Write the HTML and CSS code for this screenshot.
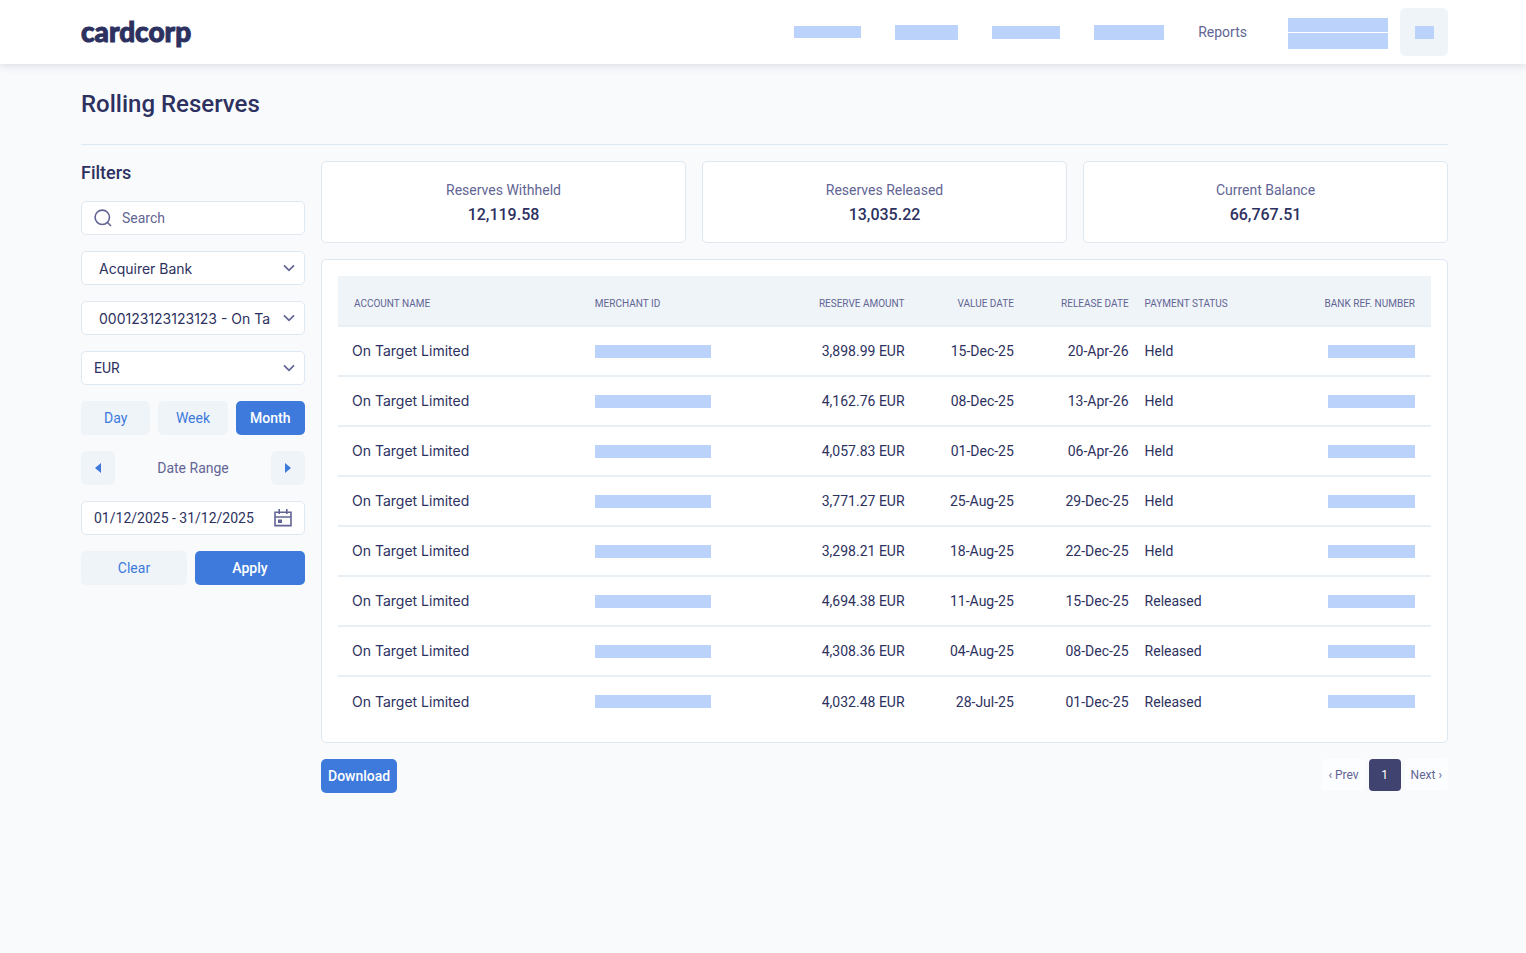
FILE: index.html
```html
<!DOCTYPE html>
<html lang="en">
<head>
<meta charset="utf-8">
<meta name="viewport" content="width=device-width, initial-scale=1">
<title>Rolling Reserves</title>
<link rel="stylesheet" href="styles.css">
</head>
<body>
<header class="topbar">
  <a class="logo" href="#">cardcorp</a>
  <nav class="nav">
    <span class="mask mask-nav-1"></span>
    <span class="mask mask-nav-2"></span>
    <span class="mask mask-nav-3"></span>
    <span class="mask mask-nav-4"></span>
    <a class="nav-link" href="#">Reports</a>
  </nav>
  <div class="user">
    <span class="mask mask-user-name"></span>
    <span class="mask mask-user-role"></span>
  </div>
  <button class="avatar" type="button" aria-label="Account"><span class="mask mask-avatar"></span></button>
</header>

<main class="page">
  <h1 class="title">Rolling Reserves</h1>
  <div class="layout">
    <form class="filters">
      <h2 class="filters-title">Filters</h2>
      <div class="field">
        <svg class="search-icon" viewBox="0 0 18 18" aria-hidden="true"><circle cx="8.3" cy="8.3" r="7.2"/><path d="M13.3 13.3 17 17"/></svg>
        <input class="control control-search" type="text" placeholder="Search" aria-label="Search">
      </div>
      <div class="field">
        <select class="control control-wide" aria-label="Acquirer bank"><option>Acquirer Bank</option></select>
        <svg class="chevron" viewBox="0 0 12 8" aria-hidden="true"><path d="M1 1.3 6 6.3 11 1.3"/></svg>
      </div>
      <div class="field">
        <select class="control control-wide" aria-label="Merchant"><option>000123123123123 - On Ta</option></select>
        <svg class="chevron" viewBox="0 0 12 8" aria-hidden="true"><path d="M1 1.3 6 6.3 11 1.3"/></svg>
      </div>
      <div class="field">
        <select class="control" aria-label="Currency"><option>EUR</option></select>
        <svg class="chevron" viewBox="0 0 12 8" aria-hidden="true"><path d="M1 1.3 6 6.3 11 1.3"/></svg>
      </div>
      <div class="periods">
        <button class="btn" type="button">Day</button>
        <button class="btn" type="button">Week</button>
        <button class="btn btn-primary" type="button">Month</button>
      </div>
      <div class="range">
        <button class="btn btn-square" type="button" aria-label="Previous range"><svg class="arrow" viewBox="0 0 6 10" aria-hidden="true"><path d="M6 0v10L0 5z"/></svg></button>
        <label for="dates">Date Range</label>
        <button class="btn btn-square" type="button" aria-label="Next range"><svg class="arrow" viewBox="0 0 6 10" aria-hidden="true"><path d="M0 0v10l6-5z"/></svg></button>
      </div>
      <div class="field">
        <input class="control control-date" id="dates" type="text" value="01/12/2025 - 31/12/2025">
        <svg class="calendar" viewBox="0 0 18 18" aria-hidden="true"><path class="calendar-line" d="M1 3.2h16v13.4H1zM1 8h16M5.2 0v5M12.8 0v5"/><path class="calendar-day" d="M4 10.5h4v3.5H4z"/></svg>
      </div>
      <div class="actions">
        <button class="btn" type="reset">Clear</button>
        <button class="btn btn-primary" type="button">Apply</button>
      </div>
    </form>

    <section class="content">
      <div class="cards">
        <div class="card"><span class="card-label">Reserves Withheld</span><strong class="card-value">12,119.58</strong></div>
        <div class="card"><span class="card-label">Reserves Released</span><strong class="card-value">13,035.22</strong></div>
        <div class="card"><span class="card-label">Current Balance</span><strong class="card-value">66,767.51</strong></div>
      </div>
      <div class="panel">
        <table class="table">
          <colgroup><col class="col-account"><col class="col-merchant"><col class="col-amount"><col class="col-value"><col class="col-release"><col class="col-status"><col class="col-ref"></colgroup>
          <thead>
            <tr><th>Account Name</th><th>Merchant ID</th><th class="num">Reserve Amount</th><th class="num">Value Date</th><th class="num">Release Date</th><th>Payment Status</th><th class="num">Bank Ref. Number</th></tr>
          </thead>
          <tbody>
            <tr><td class="account">On Target Limited</td><td><span class="mask mask-id"></span></td><td class="num">3,898.99 EUR</td><td class="num">15-Dec-25</td><td class="num">20-Apr-26</td><td>Held</td><td class="num"><span class="mask mask-ref"></span></td></tr>
            <tr><td class="account">On Target Limited</td><td><span class="mask mask-id"></span></td><td class="num">4,162.76 EUR</td><td class="num">08-Dec-25</td><td class="num">13-Apr-26</td><td>Held</td><td class="num"><span class="mask mask-ref"></span></td></tr>
            <tr><td class="account">On Target Limited</td><td><span class="mask mask-id"></span></td><td class="num">4,057.83 EUR</td><td class="num">01-Dec-25</td><td class="num">06-Apr-26</td><td>Held</td><td class="num"><span class="mask mask-ref"></span></td></tr>
            <tr><td class="account">On Target Limited</td><td><span class="mask mask-id"></span></td><td class="num">3,771.27 EUR</td><td class="num">25-Aug-25</td><td class="num">29-Dec-25</td><td>Held</td><td class="num"><span class="mask mask-ref"></span></td></tr>
            <tr><td class="account">On Target Limited</td><td><span class="mask mask-id"></span></td><td class="num">3,298.21 EUR</td><td class="num">18-Aug-25</td><td class="num">22-Dec-25</td><td>Held</td><td class="num"><span class="mask mask-ref"></span></td></tr>
            <tr><td class="account">On Target Limited</td><td><span class="mask mask-id"></span></td><td class="num">4,694.38 EUR</td><td class="num">11-Aug-25</td><td class="num">15-Dec-25</td><td>Released</td><td class="num"><span class="mask mask-ref"></span></td></tr>
            <tr><td class="account">On Target Limited</td><td><span class="mask mask-id"></span></td><td class="num">4,308.36 EUR</td><td class="num">04-Aug-25</td><td class="num">08-Dec-25</td><td>Released</td><td class="num"><span class="mask mask-ref"></span></td></tr>
            <tr><td class="account">On Target Limited</td><td><span class="mask mask-id"></span></td><td class="num">4,032.48 EUR</td><td class="num">28-Jul-25</td><td class="num">01-Dec-25</td><td>Released</td><td class="num"><span class="mask mask-ref"></span></td></tr>
          </tbody>
        </table>
      </div>
      <div class="footer">
        <button class="btn btn-primary btn-download" type="button">Download</button>
        <nav class="pager" aria-label="Pages">
          <a class="page-link" href="#">‹ Prev</a>
          <a class="page-link page-current" href="#" aria-current="page">1</a>
          <a class="page-link" href="#">Next ›</a>
        </nav>
      </div>
    </section>
  </div>
</main>
</body>
</html>
```

FILE: styles.css
```css
:root {
  --ink: #2d3160;
  --muted: #626594;
  --blue: #3d7adb;
  --tint: #eff4f9;
  --line: #dde8f2;
  --mask: #bbd2fb;
}

* { box-sizing: border-box; }

body {
  margin: 0;
  min-height: 100vh;
  background: #f9fafc;
  color: var(--ink);
  font: 14px/20px Roboto, "Liberation Sans", sans-serif;
}

a { color: inherit; text-decoration: none; }

button, input, select { font: inherit; color: inherit; }

.topbar {
  display: flex;
  align-items: center;
  height: 64px;
  padding: 0 78px 0 81px;
  background: #fff;
  box-shadow: 0 2px 8px rgba(45, 49, 96, 0.14);
}

.logo {
  margin-right: auto;
  padding-bottom: 2px;
  font: 900 28px/32px Lato, sans-serif;
  -webkit-text-stroke: 1px var(--ink);
}

.nav { display: flex; align-items: center; gap: 34px; }
.nav-link { color: var(--muted); }

.mask { display: block; background: var(--mask); }
.mask-nav-1 { width: 67px; height: 12px; }
.mask-nav-2 { width: 63px; height: 15px; }
.mask-nav-3 { width: 68px; height: 13px; }
.mask-nav-4 { width: 70px; height: 15px; }

.user { display: grid; gap: 1px; width: 100px; margin: 2px 12px 0 41px; }
.mask-user-name { height: 14px; }
.mask-user-role { height: 16px; }

.avatar {
  display: grid;
  place-items: center;
  width: 48px;
  height: 48px;
  padding: 0;
  border: 0;
  border-radius: 6px;
  background: var(--tint);
}
.mask-avatar { width: 19px; height: 13px; }

.page { padding: 24px 78px 32px 81px; }

.title {
  margin: 0 0 16px;
  padding-bottom: 24px;
  border-bottom: 1px solid var(--line);
  font-size: 24px;
  line-height: 32px;
  font-weight: 500;
}

.layout { display: flex; align-items: flex-start; gap: 16px; }

.filters { display: grid; gap: 16px; width: 224px; flex: none; }
.filters-title { margin: 0; font-size: 18px; line-height: 24px; font-weight: 500; }

.field { position: relative; }

.control {
  display: block;
  width: 100%;
  height: 34px;
  padding: 0 12px;
  border: 1px solid var(--line);
  border-radius: 5px;
  background: #fff;
  appearance: none;
}
.control::placeholder { color: var(--muted); opacity: 1; }
.control-search { padding-left: 40px; }
.control-wide { padding-top: 2px; padding-left: 17px; font-family: Inter, sans-serif; }
.control-date { padding-right: 40px; }

.search-icon, .chevron, .calendar {
  position: absolute;
  top: 0;
  bottom: 0;
  margin: auto 0;
  fill: none;
  stroke: var(--muted);
  stroke-width: 2;
  pointer-events: none;
}
.search-icon { left: 13px; width: 18px; height: 18px; stroke-width: 1.6; }
.chevron { right: 10px; width: 12px; height: 8px; stroke-width: 1.7; }
.calendar { right: 13px; width: 18px; height: 18px; stroke-width: 1.6; }
.calendar-day { fill: var(--muted); stroke: none; }

.btn {
  height: 34px;
  padding: 0;
  border: 0;
  border-radius: 5px;
  background: var(--tint);
  color: var(--blue);
}
.btn-primary { background: var(--blue); color: #fff; font-weight: 500; }

.periods { display: grid; grid-template-columns: repeat(3, 1fr); gap: 8px; }
.range { display: flex; align-items: center; justify-content: space-between; color: var(--muted); }
.btn-square { display: grid; place-items: center; width: 34px; }
.arrow { width: 6px; height: 10px; fill: var(--blue); }
.actions { display: grid; grid-template-columns: 106px 1fr; gap: 8px; }

.content { flex: 1; min-width: 0; display: grid; gap: 16px; }

.cards { display: grid; grid-template-columns: repeat(3, 1fr); gap: 16px; }
.card, .panel {
  border: 1px solid var(--line);
  border-radius: 5px;
  background: #fff;
}
.card { display: grid; gap: 4px; padding: 18px 16px 16px; text-align: center; }
.card-label { line-height: 20px; color: var(--muted); }
.card-value { font-size: 16px; line-height: 22px; font-weight: 500; }

.panel { padding: 16px; }

.table { width: 100%; border-collapse: separate; border-spacing: 0; table-layout: fixed; }
.col-account { width: 23.5%; }
.col-merchant { width: 18%; }
.col-amount { width: 11.8%; }
.col-value { width: 10%; }
.col-release { width: 10.5%; }
.col-status { width: 12.8%; }
.col-ref { width: 13.4%; }

.table th, .table td {
  height: 50px;
  padding: 0 16px 0 0;
  border-bottom: 2px solid #e8eff5;
  text-align: left;
  white-space: nowrap;
}
.table th {
  height: 51px;
  padding-top: 6px;
  background: var(--tint);
  color: var(--muted);
  font-size: 10px;
  font-weight: 400;
  text-transform: uppercase;
}
.table th:first-child { padding-left: 16px; }
.table .account { padding-left: 14px; font-family: Inter, sans-serif; }
.table .num { text-align: right; }
.table tbody tr:last-child td { height: 49px; border-bottom: 0; }
.mask-id { width: 116px; height: 13px; }
.mask-ref { width: 87px; height: 13px; margin-left: auto; }

.footer { display: flex; align-items: flex-start; justify-content: space-between; }
.btn-download { padding: 0 7px; }

.pager { display: flex; gap: 4px; font-size: 12px; color: var(--muted); }
.page-link {
  min-width: 32px;
  padding: 6px;
  border-radius: 4px;
  background: #fcfdfe;
  text-align: center;
}
.page-current { background: #40436f; color: #fff; }
```
